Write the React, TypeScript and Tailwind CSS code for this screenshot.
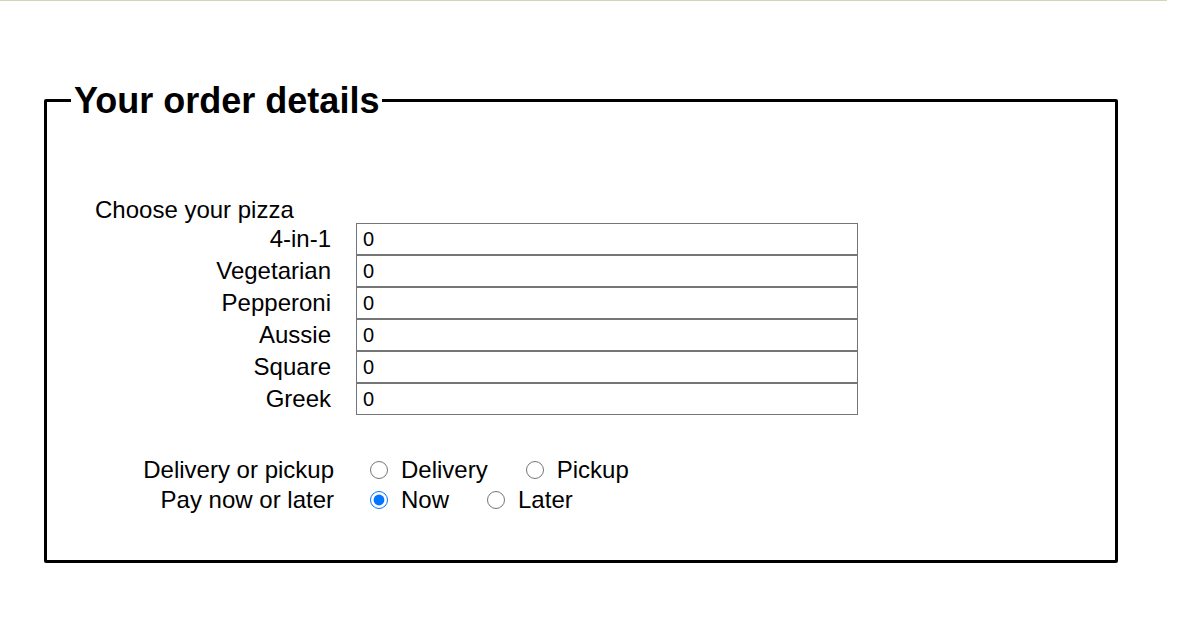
import React from "react"

const pizzas = ["4-in-1", "Vegetarian", "Pepperoni", "Aussie", "Square", "Greek"]

function Radio({ name, label, checked }: { name: string; label: string; checked?: boolean }) {
  return (
    <label className="flex items-center gap-[13px]">
      <input
        type="radio"
        name={name}
        defaultChecked={checked}
        className="m-0 h-[18px] w-[18px]"
      />
      <span>{label}</span>
    </label>
  )
}

export default function App() {
  return (
    <div className="min-h-[626px] bg-white text-black font-['Liberation_Sans',Arial,sans-serif] text-[24px]">
      <div className="h-px w-[1167px] bg-[#d8d5b4]" />

      <fieldset className="ml-[44px] mt-[79px] w-[1074px] rounded-[2px] border-[3px] border-black pl-[24px] pb-[45px]">
        <legend className="px-[3px] text-[36px] font-bold leading-[41px]">Your order details</legend>

        <div className="ml-[24px] pt-[75px]">
          <div className="leading-[27px]">Choose your pizza</div>
          <div className="grid grid-cols-[236px_502px] gap-x-[25px]">
            {pizzas.map((p) => (
              <React.Fragment key={p}>
                <div className="flex h-[32px] items-center justify-end">{p}</div>
                <input
                  type="text"
                  defaultValue="0"
                  className="h-[32px] w-[502px] border border-[#767676] bg-white px-[6px] text-[20px] text-black outline-none"
                />
              </React.Fragment>
            ))}
          </div>

          <div className="mt-[40px] grid grid-cols-[239px_auto] gap-x-[36px]">
            <div className="flex h-[30px] items-center justify-end">Delivery or pickup</div>
            <div className="flex h-[30px] items-center gap-[38px]">
              <Radio name="method" label="Delivery" />
              <Radio name="method" label="Pickup" />
            </div>
            <div className="flex h-[30px] items-center justify-end">Pay now or later</div>
            <div className="flex h-[30px] items-center gap-[38px]">
              <Radio name="pay" label="Now" checked />
              <Radio name="pay" label="Later" />
            </div>
          </div>
        </div>
      </fieldset>
    </div>
  )
}
